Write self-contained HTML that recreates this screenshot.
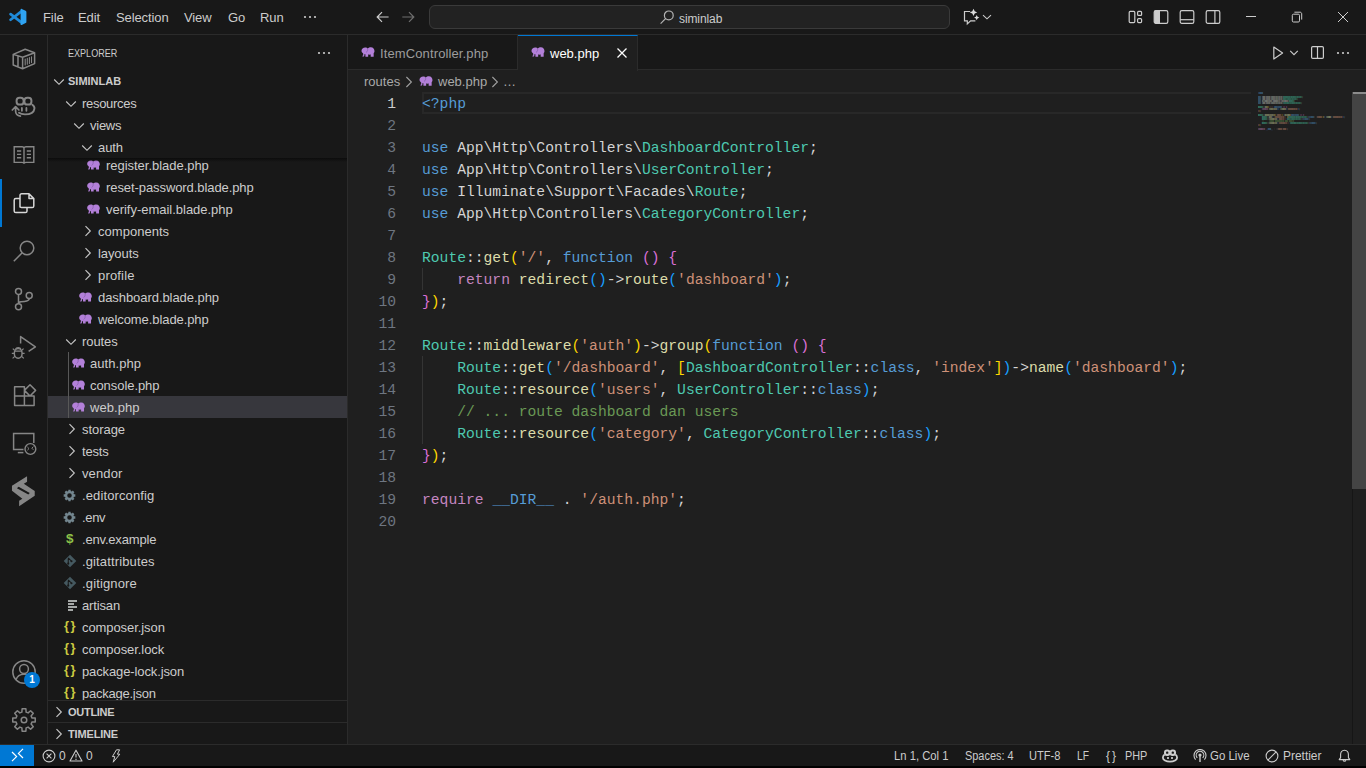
<!DOCTYPE html>
<html>
<head>
<meta charset="utf-8">
<title>web.php - siminlab</title>
<style>
*{box-sizing:border-box;margin:0;padding:0}
html,body{width:1366px;height:768px;overflow:hidden;background:#181818;color:#cccccc;font-family:"Liberation Sans",sans-serif;font-size:13px}
.abs{position:absolute}
#titlebar{position:absolute;left:0;top:0;width:1366px;height:35px;background:#181818;border-bottom:1px solid #2b2b2b}
#activity{position:absolute;left:0;top:35px;width:48px;height:709px;background:#181818;border-right:1px solid #2b2b2b}
#sidebar{position:absolute;left:48px;top:35px;width:300px;height:709px;background:#181818;border-right:1px solid #2b2b2b;overflow:hidden}
#editor{position:absolute;left:348px;top:35px;width:1018px;height:709px;background:#1f1f1f}
#status{position:absolute;left:0;top:744px;width:1366px;height:22px;background:#181818;border-top:1px solid #2b2b2b;font-size:12px;line-height:22px;color:#cccccc;white-space:nowrap}
#strip{position:absolute;left:0;top:766px;width:1366px;height:2px;background:#000}
.st{position:absolute;top:0;height:21px;line-height:22px;transform-origin:left center}
/* title bar */
.menu{letter-spacing:-.1px;position:absolute;top:1px;height:34px;line-height:34px;font-size:13px;color:#cccccc;white-space:nowrap}
#cmd{position:absolute;left:429px;top:5px;width:521px;height:24px;border:1px solid #3a3a3a;border-radius:6px;background:#222222}
/* sidebar */
.row{position:absolute;left:0;width:299px;height:22px;line-height:22px;white-space:nowrap;color:#cccccc;font-size:13px}
.row .lbl{position:absolute;top:1px}
.row svg{position:absolute}
#list{position:absolute;left:0;top:0;width:299px;height:665px;overflow:hidden}
#sticky{position:absolute;left:0;top:57px;width:299px;height:66px;background:#181818}
#sticky:after{content:"";position:absolute;left:0;top:66px;width:299px;height:4px;background:linear-gradient(rgba(0,0,0,.5),rgba(0,0,0,0))}
#sticky .row{margin-top:-57px}
.pane{position:absolute;left:0;width:299px;height:22px;line-height:22px;border-top:1px solid #2b2b2b;background:#181818;font-size:11px;font-weight:bold;color:#cccccc}
/* tabs */
#tabs{position:absolute;left:0;top:0;width:1018px;height:35px;background:#181818;border-bottom:1px solid #2b2b2b}
.tab{position:absolute;top:0;height:35px;line-height:35px;font-size:13px;border-right:1px solid #2b2b2b;white-space:nowrap}
#crumbs{position:absolute;left:0;top:35px;width:1018px;height:22px;line-height:22px;font-size:13px;color:#a9a9a9;white-space:nowrap}
#mm{position:absolute;left:910px;top:57px;width:900px;height:440px;transform:scale(.1136,.1667);transform-origin:0 0;font-family:"Liberation Mono",monospace;font-size:14.67px;line-height:13px;white-space:pre;font-weight:bold;color:#d4d4d4;opacity:.82}
.ml{position:absolute;left:0;height:12px;margin-top:-5px}
.ml,.ml span{text-shadow:0 4px 0 currentColor}
/* code */
#code{position:absolute;left:0;top:57px;width:1018px;height:652px;font-family:"Liberation Mono",monospace;font-size:14.67px;line-height:22px;white-space:pre}
.ln{margin-top:1px;position:absolute;left:0;width:48px;text-align:right;color:#6e7681;height:22px}
.cl{margin-top:1px;position:absolute;left:74px;height:22px;color:#d4d4d4}
.k{color:#569cd6}.t{color:#4ec9b0}.f{color:#dcdcaa}.s{color:#ce9178}.c{color:#6a9955}.p{color:#c586c0}
.hl{position:absolute;left:74px;top:0;width:829px;height:22px;border:2px solid #282828;border-right:0}
.ig{position:absolute;left:74px;width:1px;background:#343434}
.b1{color:#ffd700}.b2{color:#da70d6}.b3{color:#179fff}
</style>
</head>
<body>
<svg width="0" height="0" style="position:absolute"><defs>
<symbol id="el" viewBox="0 0 16 12"><path d="M4.6 0.5 C6.2 0.5 7.1 1.1 7.7 1.8 C8.7 0.8 10 0.4 11.4 0.4 C14.3 0.4 15.8 2.6 15.8 5.2 C15.8 6.2 15.4 6.8 14.8 7.4 V11.6 H11.2 V9.1 C10.2 9.3 9.2 9.3 8.2 9.1 V11.6 H4.9 V8.7 C4.4 8.8 4 8.8 3.6 8.7 V10.3 C3.6 11.4 2.7 11.9 1.5 11.6 V10.3 C2.1 10.3 2.2 10 2.2 9.6 V7.8 C0.9 7 0.2 5.9 0.2 4.6 C0.2 2.2 2.2 0.5 4.6 0.5 Z" fill="#b380d9"/><path d="M7.4 2 C8 3.6 7.4 5.6 5.6 6.6" fill="none" stroke="#6d4a94" stroke-width=".8" opacity=".75"/></symbol>
<symbol id="gear" viewBox="0 0 16 16"><path d="M6.52 2.49 L6.61 0.83 L9.39 0.83 L9.48 2.49 L10.85 3.06 L12.08 1.95 L14.05 3.92 L12.94 5.15 L13.51 6.52 L15.17 6.61 L15.17 9.39 L13.51 9.48 L12.94 10.85 L14.05 12.08 L12.08 14.05 L10.85 12.94 L9.48 13.51 L9.39 15.17 L6.61 15.17 L6.52 13.51 L5.15 12.94 L3.92 14.05 L1.95 12.08 L3.06 10.85 L2.49 9.48 L0.83 9.39 L0.83 6.61 L2.49 6.52 L3.06 5.15 L1.95 3.92 L3.92 1.95 L5.15 3.06 Z M8 5.2 A2.8 2.8 0 1 0 8 10.8 A2.8 2.8 0 1 0 8 5.2 Z" fill="#73868f" fill-rule="evenodd"/></symbol>
<symbol id="git" viewBox="0 0 16 16"><path d="M8 0.8 L15.2 8 L8 15.2 L0.8 8 Z" fill="#455960"/><path d="M6 4.5 L9.5 8 M6 5 V11 M9.5 8 V8.5" stroke="#181818" stroke-width="1.2" fill="none"/><circle cx="6" cy="11" r="1.2" fill="#181818"/><circle cx="9.7" cy="8.3" r="1.2" fill="#181818"/></symbol>
</defs></svg>
<div id="titlebar">
<svg class="abs" style="left:9px;top:8px" width="18" height="18" viewBox="0 0 18 18"><path d="M1.6 6.1 L12.4 14.4 M1.6 11.7 L12.4 3.4" stroke="#1f8ad8" stroke-width="2.7" stroke-linecap="round" fill="none"/><path d="M11.6 1.4 C11.6 0.8 12.2 0.6 12.8 0.9 L16.6 2.7 C17.1 2.9 17.4 3.3 17.4 3.9 V13.9 C17.4 14.5 17.1 14.9 16.6 15.1 L12.8 16.9 C12.2 17.2 11.6 17 11.6 16.4 Z" fill="#2fa3f2"/></svg>
<div class="menu" style="left:43px">File</div>
<div class="menu" style="left:78px">Edit</div>
<div class="menu" style="left:116px">Selection</div>
<div class="menu" style="left:184px">View</div>
<div class="menu" style="left:228px">Go</div>
<div class="menu" style="left:260px">Run</div>
<svg class="abs" style="left:303px;top:15px" width="14" height="4" viewBox="0 0 14 4"><circle cx="2" cy="2" r="1.1" fill="#cccccc"/><circle cx="7" cy="2" r="1.1" fill="#cccccc"/><circle cx="12" cy="2" r="1.1" fill="#cccccc"/></svg>
<svg class="abs" style="left:374.5px;top:9.4px" width="16" height="16" viewBox="0 0 16 16"><path d="M13.6 8 H2.5 M7 3.2 L2.2 8 L7 12.8" fill="none" stroke="#cccccc" stroke-width="1.2"/></svg>
<svg class="abs" style="left:400px;top:9.4px" width="16" height="16" viewBox="0 0 16 16"><path d="M2.3 8 H13.5 M9 3.2 L13.8 8 L9 12.8" fill="none" stroke="#6f6f6f" stroke-width="1.2"/></svg>
<div id="cmd"></div>
<svg class="abs" style="left:659px;top:9px" width="16" height="16" viewBox="0 0 16 16"><circle cx="9.8" cy="6.4" r="4.4" fill="none" stroke="#b4b4b4" stroke-width="1.2"/><path d="M6.8 9.4 L1.6 14.6" stroke="#b4b4b4" stroke-width="1.2"/></svg>
<div class="menu" style="left:679px;top:2px;font-size:12px;letter-spacing:-0.1px">siminlab</div>
<!-- title right -->
<svg class="abs" style="left:960px;top:6px" width="24" height="22" viewBox="0 0 24 22"><path d="M10.2 5.5 H4.5 V14.8 H7.3 V17.9 L10.6 14.8 H15.4" fill="none" stroke="#cccccc" stroke-width="1.2" stroke-linejoin="miter"/><path d="M13.5 2.7 L14.7 5.2 L17.2 6.4 L14.7 7.6 L13.5 10.1 L12.3 7.6 L9.8 6.4 L12.3 5.2 Z M16.7 9 L17.55 10.75 L19.3 11.6 L17.55 12.45 L16.7 14.2 L15.85 12.45 L14.1 11.6 L15.85 10.75 Z" fill="#dcdcdc"/></svg>
<svg class="abs" style="left:982px;top:13px" width="10" height="8" viewBox="0 0 10 8"><path d="M1 2.2 L5 5.8 L9 2.2" fill="none" stroke="#cccccc" stroke-width="1.1"/></svg>
<svg class="abs" style="left:1128px;top:10px" width="15" height="14" viewBox="0 0 15 14" fill="none" stroke="#cccccc" stroke-width="1.2"><rect x="1.2" y="1.4" width="5.6" height="11.2" rx="1"/><rect x="9.6" y="1.4" width="4" height="4" rx="1"/><rect x="9.6" y="8.6" width="4" height="4" rx="1"/></svg>
<svg class="abs" style="left:1153px;top:9px" width="16" height="16" viewBox="0 0 16 16"><rect x="1.2" y="1.6" width="13.6" height="12.8" rx="1.6" fill="none" stroke="#cccccc" stroke-width="1.2"/><path d="M1.2 3 C1.2 2.2 1.8 1.6 2.8 1.6 H7 V14.4 H2.8 C1.8 14.4 1.2 13.8 1.2 13 Z" fill="#cccccc"/></svg>
<svg class="abs" style="left:1179px;top:9px" width="16" height="16" viewBox="0 0 16 16" fill="none" stroke="#cccccc" stroke-width="1.2"><rect x="1.2" y="1.6" width="13.6" height="12.8" rx="1.6"/><path d="M1.2 10.7 H14.8"/></svg>
<svg class="abs" style="left:1205px;top:9px" width="16" height="16" viewBox="0 0 16 16" fill="none" stroke="#cccccc" stroke-width="1.2"><rect x="1.2" y="1.6" width="13.6" height="12.8" rx="1.6"/><path d="M9.9 1.6 V14.4"/></svg>
<div class="abs" style="left:1246px;top:16px;width:10px;height:1px;background:#cccccc"></div>
<svg class="abs" style="left:1291px;top:11px" width="13" height="13" viewBox="0 0 13 13" fill="none" stroke="#cccccc" stroke-width="1"><rect x="1.3" y="3.2" width="7.2" height="7.8" rx="1.2"/><path d="M3.4 1.2 H9 C10 1.2 10.7 1.9 10.7 2.9 V8.6"/></svg>
<svg class="abs" style="left:1337px;top:11px" width="12" height="12" viewBox="0 0 12 12"><path d="M1 1 L11 11 M11 1 L1 11" stroke="#cccccc" stroke-width="1" fill="none"/></svg>
</div>
<div id="activity">
<!-- containers -->
<svg class="abs" style="left:12px;top:13px" width="24" height="24" viewBox="0 0 24 24" fill="none" stroke="#868686" stroke-width="1.5" stroke-linejoin="round" stroke-linecap="round"><path d="M1.2 6.4 L13.2 1.2 L22.6 4.8 V15.6 L10.6 20.8 L1.2 17 Z M1.2 6.4 L10.6 9.2 L22.6 4.8 M10.6 9.2 V20.8 M6 8 V18.8"/><path d="M13.2 11 V17 M15.3 10.2 V16.2 M17.4 9.5 V15.4 M19.5 8.7 V14.6" stroke-width="1.1"/></svg>
<!-- copilot edits -->
<svg class="abs" style="left:6px;top:53px" width="36" height="36" viewBox="0 0 36 36" fill="none" stroke="#868686" stroke-width="2" stroke-linecap="round"><rect x="10.6" y="9.7" width="7" height="6.9" rx="2.9"/><rect x="18.4" y="9.7" width="7" height="6.9" rx="2.9"/><path d="M26.3 16.8 C28.2 18 28.6 19.6 28.4 20.8 C28 23.8 25 26.2 19 26.4 C16.4 26.4 14.4 25.8 13 24.8" stroke-width="1.9"/><path d="M15.9 19.9 V22.8 M20.4 19.9 V22.8" stroke-width="1.8"/><path d="M6.3 22 L9.6 18.7 L12.9 22 M9.6 19 V23 C9.6 26 11.4 27.7 14.4 28.1" stroke-width="1.7" stroke-linejoin="round"/></svg>
<!-- book -->
<svg class="abs" style="left:12px;top:108px" width="24" height="24" viewBox="0 0 24 24" fill="none" stroke="#868686" stroke-width="1.4"><path d="M2.2 3.8 H10 C11.2 3.8 12 4.6 12 5.6 C12 4.6 12.8 3.8 14 3.8 H21.8 V19.4 H14 C12.8 19.4 12 20 12 20.8 C12 20 11.2 19.4 10 19.4 H2.2 Z M12 5.6 V20.6 M5 8 H9.2 M5 11.4 H9.2 M5 14.8 H9.2 M14.8 8 H19 M14.8 11.4 H19 M14.8 14.8 H19"/></svg>
<!-- explorer (active) -->
<div class="abs" style="left:0;top:144px;width:2px;height:48px;background:#0078d4"></div>
<svg class="abs" style="left:12px;top:156px" width="24" height="24" viewBox="0 0 24 24" fill="none" stroke="#d7d7d7" stroke-width="1.5" stroke-linejoin="round"><path d="M8 16.5 V4.5 C8 3.4 8.6 2.8 9.6 2.8 H17 L21.8 7.6 V15 C21.8 16 21.2 16.6 20.2 16.6 H9.6 C8.6 16.6 8 16 8 15 M17 2.8 V7.6 H21.8 M7.6 7.6 H3.8 C2.8 7.6 2.2 8.2 2.2 9.2 V20 C2.2 21 2.8 21.6 3.8 21.6 H13.4 C14.4 21.6 15 21 15 20 V16.8"/></svg>
<!-- search -->
<svg class="abs" style="left:12px;top:204px" width="24" height="24" viewBox="0 0 24 24" fill="none" stroke="#868686" stroke-width="1.5"><circle cx="15" cy="9" r="6.8"/><path d="M10.2 13.8 L1.8 22.2"/></svg>
<!-- git -->
<svg class="abs" style="left:12px;top:252px" width="24" height="24" viewBox="0 0 24 24" fill="none" stroke="#868686" stroke-width="1.5"><circle cx="6.5" cy="4.4" r="3"/><circle cx="6.5" cy="19.8" r="3"/><circle cx="17.2" cy="8.4" r="3"/><path d="M6.5 7.4 V16.8 M17.2 11.4 C17.6 14 13 14.6 9 14.8 C7.4 15 6.5 15.8 6.5 17"/></svg>
<!-- debug -->
<svg class="abs" style="left:11px;top:299px" width="26" height="26" viewBox="0 0 26 26" fill="none" stroke="#868686" stroke-width="1.5" stroke-linejoin="round"><path d="M9.6 9.5 V2.6 L24.4 12.8 L17.6 17.4"/><g transform="translate(0,1.6)"><ellipse cx="7.2" cy="17.8" rx="3.9" ry="4.8"/><path d="M3.6 15.6 H10.8 M4.6 13.4 C5.2 11.6 9.2 11.6 9.8 13.4 M3.3 17.8 H0.8 M13.6 17.8 H11.1 M3.8 20.8 L1.6 22.8 M10.6 20.8 L12.8 22.8 M3.6 14.6 L1.8 13 M10.8 14.6 L12.6 13" stroke-width="1.2"/></g></svg>
<!-- extensions -->
<svg class="abs" style="left:12px;top:348px" width="26" height="26" viewBox="0 0 26 26" fill="none" stroke="#868686" stroke-width="1.5" stroke-linejoin="round"><path d="M2.6 3.8 H12.4 V22.4 H2.6 Z M2.6 13 H22.1 V22.4 H12.4 M18 1.8 L23.6 7.4 L18 13 L12.4 7.4 Z"/></svg>
<!-- remote explorer -->
<svg class="abs" style="left:11px;top:395px" width="27" height="26" viewBox="0 0 27 26" fill="none" stroke="#868686" stroke-width="1.5"><path d="M12.5 19.4 H2.6 V3.4 H22.8 V13"/><path d="M6.8 22.6 H12.4"/><circle cx="19.4" cy="19" r="5.4" stroke-width="1.4"/><path d="M16.4 17 L18 18.6 L16.4 20.2 M22.4 16.6 L20.8 18.2 L22.4 19.8" stroke-width="1"/></svg>
<!-- S logo -->
<svg class="abs" style="left:11px;top:441px" width="26" height="32" viewBox="0 0 26 32"><path d="M16.06 0.2 V5.65 L12.84 7.63 L23.73 15.06 V19.76 L8.14 30.16 V24.7 L11.36 22.73 L0.96 14.8 V9.86 Z M7.64 10.85 L18.78 17.04 L17.3 18.5 L5.9 12.3 Z" fill="#868686" fill-rule="evenodd"/></svg>
<!-- account -->
<svg class="abs" style="left:11px;top:624px" width="26" height="26" viewBox="0 0 26 26" fill="none" stroke="#868686" stroke-width="1.5"><circle cx="13" cy="13" r="11.2"/><circle cx="13" cy="10" r="4.4"/><path d="M5 20.8 C6.4 16.4 9.6 15.2 13 15.2 C16.4 15.2 19.6 16.4 21 20.8"/></svg>
<div class="abs" style="left:24px;top:637px;width:16px;height:16px;border-radius:8px;background:#0078d4;color:#fff;font-size:10px;font-weight:bold;line-height:16px;text-align:center">1</div>
<!-- gear -->
<svg class="abs" style="left:11px;top:672px" width="26" height="26" viewBox="0 0 26 26" fill="none" stroke="#868686" stroke-width="1.5" stroke-linejoin="round"><path d="M10.88 5.08 L11.12 1.76 L14.88 1.76 L15.12 5.08 L17.10 5.90 L19.62 3.72 L22.28 6.38 L20.10 8.90 L20.92 10.88 L24.24 11.12 L24.24 14.88 L20.92 15.12 L20.10 17.10 L22.28 19.62 L19.62 22.28 L17.10 20.10 L15.12 20.92 L14.88 24.24 L11.12 24.24 L10.88 20.92 L8.90 20.10 L6.38 22.28 L3.72 19.62 L5.90 17.10 L5.08 15.12 L1.76 14.88 L1.76 11.12 L5.08 10.88 L5.90 8.90 L3.72 6.38 L6.38 3.72 L8.90 5.90 Z"/><circle cx="13" cy="13" r="2.8"/></svg>
</div>
<div id="sidebar">
<div class="abs" style="left:20px;top:0;height:35px;line-height:36px;font-size:11px;color:#cccccc;transform:scaleX(.823);transform-origin:left">EXPLORER</div>
<svg class="abs" style="left:269px;top:16px" width="14" height="4" viewBox="0 0 14 4"><circle cx="2" cy="2" r="1.1" fill="#cccccc"/><circle cx="7" cy="2" r="1.1" fill="#cccccc"/><circle cx="12" cy="2" r="1.1" fill="#cccccc"/></svg>
<div class="row" style="top:35px;font-weight:bold;font-size:11px"><svg class="abs" style="left:5px;top:8px" width="12" height="8" viewBox="0 0 12 8"><path d="M1.2 1.5 L6 6.3 L10.8 1.5" fill="none" stroke="#c5c5c5" stroke-width="1.15"/></svg><span class="lbl" style="left:20px;top:0">SIMINLAB</span></div>
<div id="list">
<div class="row" style="top:119px"><svg class="abs" style="left:39px;top:6px" width="13" height="10"><use href="#el"/></svg><span class="lbl" style="left:58px;letter-spacing:-0.03px">register.blade.php</span></div>
<div class="row" style="top:141px"><svg class="abs" style="left:39px;top:6px" width="13" height="10"><use href="#el"/></svg><span class="lbl" style="left:58px;letter-spacing:-0.08px">reset-password.blade.php</span></div>
<div class="row" style="top:163px"><svg class="abs" style="left:39px;top:6px" width="13" height="10"><use href="#el"/></svg><span class="lbl" style="left:58px;letter-spacing:-0.02px">verify-email.blade.php</span></div>
<div class="row" style="top:185px"><svg class="abs" style="left:36px;top:5px" width="8" height="12" viewBox="0 0 8 12"><path d="M1.5 1.2 L6.3 6 L1.5 10.8" fill="none" stroke="#c5c5c5" stroke-width="1.15"/></svg><span class="lbl" style="left:50px;letter-spacing:0.03px">components</span></div>
<div class="row" style="top:207px"><svg class="abs" style="left:36px;top:5px" width="8" height="12" viewBox="0 0 8 12"><path d="M1.5 1.2 L6.3 6 L1.5 10.8" fill="none" stroke="#c5c5c5" stroke-width="1.15"/></svg><span class="lbl" style="left:50px;letter-spacing:-0.09px">layouts</span></div>
<div class="row" style="top:229px"><svg class="abs" style="left:36px;top:5px" width="8" height="12" viewBox="0 0 8 12"><path d="M1.5 1.2 L6.3 6 L1.5 10.8" fill="none" stroke="#c5c5c5" stroke-width="1.15"/></svg><span class="lbl" style="left:50px;letter-spacing:0.18px">profile</span></div>
<div class="row" style="top:251px"><svg class="abs" style="left:31px;top:6px" width="13" height="10"><use href="#el"/></svg><span class="lbl" style="left:50px;letter-spacing:-0.06px">dashboard.blade.php</span></div>
<div class="row" style="top:273px"><svg class="abs" style="left:31px;top:6px" width="13" height="10"><use href="#el"/></svg><span class="lbl" style="left:50px;letter-spacing:-0.08px">welcome.blade.php</span></div>
<div class="row" style="top:295px"><svg class="abs" style="left:17px;top:8px" width="12" height="8" viewBox="0 0 12 8"><path d="M1.2 1.5 L6 6.3 L10.8 1.5" fill="none" stroke="#c5c5c5" stroke-width="1.15"/></svg><span class="lbl" style="left:34px;letter-spacing:-0.07px">routes</span></div>
<div class="row" style="top:317px"><svg class="abs" style="left:24px;top:6px" width="13" height="10"><use href="#el"/></svg><span class="lbl" style="left:42px;letter-spacing:0.05px">auth.php</span></div>
<div class="row" style="top:339px"><svg class="abs" style="left:24px;top:6px" width="13" height="10"><use href="#el"/></svg><span class="lbl" style="left:42px;letter-spacing:-0.06px">console.php</span></div>
<div class="row" style="top:361px;background:#37373d"><svg class="abs" style="left:24px;top:6px" width="13" height="10"><use href="#el"/></svg><span class="lbl" style="left:42px;letter-spacing:0.05px">web.php</span></div>
<div class="row" style="top:383px"><svg class="abs" style="left:20px;top:5px" width="8" height="12" viewBox="0 0 8 12"><path d="M1.5 1.2 L6.3 6 L1.5 10.8" fill="none" stroke="#c5c5c5" stroke-width="1.15"/></svg><span class="lbl" style="left:34px;letter-spacing:-0.05px">storage</span></div>
<div class="row" style="top:405px"><svg class="abs" style="left:20px;top:5px" width="8" height="12" viewBox="0 0 8 12"><path d="M1.5 1.2 L6.3 6 L1.5 10.8" fill="none" stroke="#c5c5c5" stroke-width="1.15"/></svg><span class="lbl" style="left:34px;letter-spacing:-0.17px">tests</span></div>
<div class="row" style="top:427px"><svg class="abs" style="left:20px;top:5px" width="8" height="12" viewBox="0 0 8 12"><path d="M1.5 1.2 L6.3 6 L1.5 10.8" fill="none" stroke="#c5c5c5" stroke-width="1.15"/></svg><span class="lbl" style="left:34px;letter-spacing:0.11px">vendor</span></div>
<div class="row" style="top:449px"><svg class="abs" style="left:15px;top:5px" width="13" height="13"><use href="#gear"/></svg><span class="lbl" style="left:34px;letter-spacing:0.12px">.editorconfig</span></div>
<div class="row" style="top:471px"><svg class="abs" style="left:15px;top:5px" width="13" height="13"><use href="#gear"/></svg><span class="lbl" style="left:34px;letter-spacing:-0.34px">.env</span></div>
<div class="row" style="top:493px"><span class="abs" style="left:18px;top:0;color:#8dc149;font-size:13.5px;font-weight:bold">$</span><span class="lbl" style="left:34px;letter-spacing:-0.18px">.env.example</span></div>
<div class="row" style="top:515px"><svg class="abs" style="left:15px;top:4px" width="14" height="14"><use href="#git"/></svg><span class="lbl" style="left:34px;letter-spacing:0.13px">.gitattributes</span></div>
<div class="row" style="top:537px"><svg class="abs" style="left:15px;top:4px" width="14" height="14"><use href="#git"/></svg><span class="lbl" style="left:34px;letter-spacing:0.15px">.gitignore</span></div>
<div class="row" style="top:559px"><svg class="abs" style="left:20px;top:6px" width="10" height="11" viewBox="0 0 10 11"><path d="M0 1 H9 M0 4 H6 M0 7 H9 M0 10 H5" stroke="#d4d7d6" stroke-width="1.4"/></svg><span class="lbl" style="left:34px;letter-spacing:-0.15px">artisan</span></div>
<div class="row" style="top:581px"><span class="abs" style="left:16px;top:-1px;color:#cbcb41;font-size:13px;font-weight:bold;letter-spacing:1.5px;line-height:22px">{}</span><span class="lbl" style="left:34px;letter-spacing:-0.08px">composer.json</span></div>
<div class="row" style="top:603px"><span class="abs" style="left:16px;top:-1px;color:#cbcb41;font-size:13px;font-weight:bold;letter-spacing:1.5px;line-height:22px">{}</span><span class="lbl" style="left:34px;letter-spacing:-0.07px">composer.lock</span></div>
<div class="row" style="top:625px"><span class="abs" style="left:16px;top:-1px;color:#cbcb41;font-size:13px;font-weight:bold;letter-spacing:1.5px;line-height:22px">{}</span><span class="lbl" style="left:34px;letter-spacing:-0.12px">package-lock.json</span></div>
<div class="row" style="top:647px"><span class="abs" style="left:16px;top:-1px;color:#cbcb41;font-size:13px;font-weight:bold;letter-spacing:1.5px;line-height:22px">{}</span><span class="lbl" style="left:34px;letter-spacing:-0.24px">package.json</span></div>
<div class="abs" style="left:20px;top:317px;width:1px;height:66px;background:#585858"></div>
</div>
<div id="sticky">
<div class="row" style="top:57px"><svg class="abs" style="left:17px;top:8px" width="12" height="8" viewBox="0 0 12 8"><path d="M1.2 1.5 L6 6.3 L10.8 1.5" fill="none" stroke="#c5c5c5" stroke-width="1.15"/></svg><span class="lbl" style="left:34px;letter-spacing:-0.3px">resources</span></div>
<div class="row" style="top:79px"><svg class="abs" style="left:25px;top:8px" width="12" height="8" viewBox="0 0 12 8"><path d="M1.2 1.5 L6 6.3 L10.8 1.5" fill="none" stroke="#c5c5c5" stroke-width="1.15"/></svg><span class="lbl" style="left:42px;letter-spacing:-0.25px">views</span></div>
<div class="row" style="top:101px"><svg class="abs" style="left:33px;top:8px" width="12" height="8" viewBox="0 0 12 8"><path d="M1.2 1.5 L6 6.3 L10.8 1.5" fill="none" stroke="#c5c5c5" stroke-width="1.15"/></svg><span class="lbl" style="left:50px;letter-spacing:-0.08px">auth</span></div>
</div>
<div class="pane" style="top:665px"><svg class="abs" style="left:6.7px;top:5px" width="8" height="12" viewBox="0 0 8 12"><path d="M1.5 1.2 L6.3 6 L1.5 10.8" fill="none" stroke="#c5c5c5" stroke-width="1.15"/></svg><span class="abs" style="left:20px;top:0;letter-spacing:-0.28px">OUTLINE</span></div>
<div class="pane" style="top:687px"><svg class="abs" style="left:6.7px;top:5px" width="8" height="12" viewBox="0 0 8 12"><path d="M1.5 1.2 L6.3 6 L1.5 10.8" fill="none" stroke="#c5c5c5" stroke-width="1.15"/></svg><span class="abs" style="left:20px;top:0;letter-spacing:-0.16px">TIMELINE</span></div>
</div>
<div id="editor">
<div id="tabs">
<div class="tab" style="left:0;width:170px;color:#9d9d9d"><svg class="abs" style="left:13px;top:12px" width="14" height="10"><use href="#el"/></svg><span class="abs" style="left:32px;top:1px;letter-spacing:.12px">ItemController.php</span></div>
<div class="tab" style="left:170px;width:120px;color:#ffffff;background:#1f1f1f;border-top:1px solid #0078d4;height:36px;line-height:33px"><svg class="abs" style="left:13px;top:11px" width="14" height="10"><use href="#el"/></svg><span class="abs" style="left:32px;top:1px">web.php</span>
<svg class="abs" style="left:98px;top:11px" width="12" height="12" viewBox="0 0 12 12"><path d="M1.5 1.5 L10.5 10.5 M10.5 1.5 L1.5 10.5" stroke="#ffffff" stroke-width="1.3" fill="none"/></svg></div>
<svg class="abs" style="left:924px;top:10px" width="14" height="16" viewBox="0 0 14 16"><path d="M1.8 2 L10.6 8 L1.8 14 Z" fill="none" stroke="#cccccc" stroke-width="1.2" stroke-linejoin="round"/></svg>
<svg class="abs" style="left:941px;top:14px" width="10" height="8" viewBox="0 0 10 8"><path d="M1.2 1.8 L5 5.6 L8.8 1.8" fill="none" stroke="#cccccc" stroke-width="1.1"/></svg>
<svg class="abs" style="left:962px;top:10px" width="15" height="15" viewBox="0 0 15 15"><rect x="1.6" y="1.6" width="11.8" height="11.8" rx="1.2" fill="none" stroke="#cccccc" stroke-width="1.2"/><path d="M7.5 1.6 V13.4" stroke="#cccccc" stroke-width="1.2"/></svg>
<svg class="abs" style="left:988px;top:16px" width="14" height="4" viewBox="0 0 14 4"><circle cx="2" cy="2" r="1.1" fill="#cccccc"/><circle cx="7" cy="2" r="1.1" fill="#cccccc"/><circle cx="12" cy="2" r="1.1" fill="#cccccc"/></svg>
</div>
<div id="crumbs">
<span class="abs" style="left:16px;top:1px">routes</span>
<svg class="abs" style="left:57px;top:6px" width="8" height="12" viewBox="0 0 8 12"><path d="M1.4 1 L6.4 6 L1.4 11" fill="none" stroke="#a0a0a0" stroke-width="1.1"/></svg>
<svg class="abs" style="left:71px;top:6px" width="14" height="10"><use href="#el"/></svg>
<span class="abs" style="left:90px;top:1px">web.php</span>
<svg class="abs" style="left:143px;top:6px" width="8" height="12" viewBox="0 0 8 12"><path d="M1.4 1 L6.4 6 L1.4 11" fill="none" stroke="#a0a0a0" stroke-width="1.1"/></svg>
<span class="abs" style="left:155px;top:1px">&#8230;</span>
</div>
<div id="mm"><div class="ml" style="top:0px"><span class="k">&lt;?php</span></div><div class="ml" style="top:24px"><span class="k">use</span> App\Http\Controllers\<span class="t">DashboardController</span>;</div><div class="ml" style="top:36px"><span class="k">use</span> App\Http\Controllers\<span class="t">UserController</span>;</div><div class="ml" style="top:48px"><span class="k">use</span> Illuminate\Support\Facades\<span class="t">Route</span>;</div><div class="ml" style="top:60px"><span class="k">use</span> App\Http\Controllers\<span class="t">CategoryController</span>;</div><div class="ml" style="top:84px"><span class="t">Route</span>::<span class="f">get</span><span class="b1">(</span><span class="s">'/'</span>, <span class="k">function</span> <span class="b2">()</span> <span class="b2">{</span></div><div class="ml" style="top:96px">    <span class="p">return</span> <span class="f">redirect</span><span class="b3">()</span>-&gt;<span class="f">route</span><span class="b3">(</span><span class="s">'dashboard'</span><span class="b3">)</span>;</div><div class="ml" style="top:108px"><span class="b2">}</span><span class="b1">)</span>;</div><div class="ml" style="top:132px"><span class="t">Route</span>::<span class="f">middleware</span><span class="b1">(</span><span class="s">'auth'</span><span class="b1">)</span>-&gt;<span class="f">group</span><span class="b1">(</span><span class="k">function</span> <span class="b2">()</span> <span class="b2">{</span></div><div class="ml" style="top:144px">    <span class="t">Route</span>::<span class="f">get</span><span class="b3">(</span><span class="s">'/dashboard'</span>, <span class="b1">[</span><span class="t">DashboardController</span>::<span class="k">class</span>, <span class="s">'index'</span><span class="b1">]</span><span class="b3">)</span>-&gt;<span class="f">name</span><span class="b3">(</span><span class="s">'dashboard'</span><span class="b3">)</span>;</div><div class="ml" style="top:156px">    <span class="t">Route</span>::<span class="f">resource</span><span class="b3">(</span><span class="s">'users'</span>, <span class="t">UserController</span>::<span class="k">class</span><span class="b3">)</span>;</div><div class="ml" style="top:168px">    <span class="c">// ... route dashboard dan users</span></div><div class="ml" style="top:180px">    <span class="t">Route</span>::<span class="f">resource</span><span class="b3">(</span><span class="s">'category'</span>, <span class="t">CategoryController</span>::<span class="k">class</span><span class="b3">)</span>;</div><div class="ml" style="top:192px"><span class="b2">}</span><span class="b1">)</span>;</div><div class="ml" style="top:216px"><span class="p">require</span> <span class="k">__DIR__</span> . <span class="s">'/auth.php'</span>;</div></div>
<div class="abs" style="left:1004px;top:57px;width:1px;height:652px;background:#161616"></div><div class="abs" style="left:1004px;top:57px;width:14px;height:397px;background:#444444"></div><div class="abs" style="left:1005px;top:57px;width:13px;height:2px;background:#8c8c8c"></div>
<div id="code">
<div class="hl"></div>
<div class="ig" style="top:176px;height:22px"></div>
<div class="ig" style="top:264px;height:88px"></div>
<div class="ln" style="top:0;color:#cccccc">1</div><div class="cl" style="top:0"><span class="k">&lt;?php</span></div>
<div class="ln" style="top:22px">2</div>
<div class="ln" style="top:44px">3</div><div class="cl" style="top:44px"><span class="k">use</span> App\Http\Controllers\<span class="t">DashboardController</span>;</div>
<div class="ln" style="top:66px">4</div><div class="cl" style="top:66px"><span class="k">use</span> App\Http\Controllers\<span class="t">UserController</span>;</div>
<div class="ln" style="top:88px">5</div><div class="cl" style="top:88px"><span class="k">use</span> Illuminate\Support\Facades\<span class="t">Route</span>;</div>
<div class="ln" style="top:110px">6</div><div class="cl" style="top:110px"><span class="k">use</span> App\Http\Controllers\<span class="t">CategoryController</span>;</div>
<div class="ln" style="top:132px">7</div>
<div class="ln" style="top:154px">8</div><div class="cl" style="top:154px"><span class="t">Route</span>::<span class="f">get</span><span class="b1">(</span><span class="s">'/'</span>, <span class="k">function</span> <span class="b2">()</span> <span class="b2">{</span></div>
<div class="ln" style="top:176px">9</div><div class="cl" style="top:176px">    <span class="p">return</span> <span class="f">redirect</span><span class="b3">()</span>-&gt;<span class="f">route</span><span class="b3">(</span><span class="s">'dashboard'</span><span class="b3">)</span>;</div>
<div class="ln" style="top:198px">10</div><div class="cl" style="top:198px"><span class="b2">}</span><span class="b1">)</span>;</div>
<div class="ln" style="top:220px">11</div>
<div class="ln" style="top:242px">12</div><div class="cl" style="top:242px"><span class="t">Route</span>::<span class="f">middleware</span><span class="b1">(</span><span class="s">'auth'</span><span class="b1">)</span>-&gt;<span class="f">group</span><span class="b1">(</span><span class="k">function</span> <span class="b2">()</span> <span class="b2">{</span></div>
<div class="ln" style="top:264px">13</div><div class="cl" style="top:264px">    <span class="t">Route</span>::<span class="f">get</span><span class="b3">(</span><span class="s">'/dashboard'</span>, <span class="b1">[</span><span class="t">DashboardController</span>::<span class="k">class</span>, <span class="s">'index'</span><span class="b1">]</span><span class="b3">)</span>-&gt;<span class="f">name</span><span class="b3">(</span><span class="s">'dashboard'</span><span class="b3">)</span>;</div>
<div class="ln" style="top:286px">14</div><div class="cl" style="top:286px">    <span class="t">Route</span>::<span class="f">resource</span><span class="b3">(</span><span class="s">'users'</span>, <span class="t">UserController</span>::<span class="k">class</span><span class="b3">)</span>;</div>
<div class="ln" style="top:308px">15</div><div class="cl" style="top:308px">    <span class="c">// ... route dashboard dan users</span></div>
<div class="ln" style="top:330px">16</div><div class="cl" style="top:330px">    <span class="t">Route</span>::<span class="f">resource</span><span class="b3">(</span><span class="s">'category'</span>, <span class="t">CategoryController</span>::<span class="k">class</span><span class="b3">)</span>;</div>
<div class="ln" style="top:352px">17</div><div class="cl" style="top:352px"><span class="b2">}</span><span class="b1">)</span>;</div>
<div class="ln" style="top:374px">18</div>
<div class="ln" style="top:396px">19</div><div class="cl" style="top:396px"><span class="p">require</span> <span class="k">__DIR__</span> . <span class="s">'/auth.php'</span>;</div>
<div class="ln" style="top:418px">20</div>
</div>
</div>
<div id="status">
<div class="abs" style="left:0;top:0;width:34px;height:21px;background:#0078d4"></div>
<svg class="abs" style="left:11px;top:3px" width="13" height="14" viewBox="0 0 13 14"><path d="M1 4 L5.6 8.6 L1 13.2 M12 0.8 L7.4 5.4 L12 10" fill="none" stroke="#ffffff" stroke-width="1.2"/></svg>
<svg class="abs" style="left:42px;top:4px" width="14" height="14" viewBox="0 0 14 14"><circle cx="7" cy="7" r="5.9" fill="none" stroke="#cccccc" stroke-width="1.1"/><path d="M4.6 4.6 L9.4 9.4 M9.4 4.6 L4.6 9.4" stroke="#cccccc" stroke-width="1.1"/></svg>
<span class="st" style="left:59px">0</span>
<svg class="abs" style="left:69px;top:4px" width="14" height="13" viewBox="0 0 14 13"><path d="M7 1.2 L13 12 H1 Z" fill="none" stroke="#cccccc" stroke-width="1.1" stroke-linejoin="round"/><path d="M7 5 V8.6 M7 9.8 V11" stroke="#cccccc" stroke-width="1.1"/></svg>
<span class="st" style="left:86px">0</span>
<svg class="abs" style="left:111px;top:4px" width="10" height="14" viewBox="0 0 10 14"><path d="M5.5 0.8 L8.6 0.8 L6.4 5.2 H8.8 L2.2 13.2 L3.8 7.6 H1.4 Z" fill="none" stroke="#cccccc" stroke-width="1" stroke-linejoin="round"/></svg>
<span class="st" style="left:894px;transform:scaleX(0.937)">Ln 1, Col 1</span>
<span class="st" style="left:965px;transform:scaleX(0.91)">Spaces: 4</span>
<span class="st" style="left:1029px;transform:scaleX(0.926)">UTF-8</span>
<span class="st" style="left:1077px;transform:scaleX(0.855)">LF</span>
<span class="st" style="left:1106px;letter-spacing:2px">{}</span>
<span class="st" style="left:1125px;transform:scaleX(0.907)">PHP</span>
<svg class="abs" style="left:1162px;top:4px" width="16" height="14" viewBox="0 0 16 14" fill="none" stroke="#cccccc"><rect x="3" y="1.5" width="4.4" height="4.4" rx="1.9" stroke-width="2.1"/><rect x="8.6" y="1.5" width="4.4" height="4.4" rx="1.9" stroke-width="2.1"/><path d="M2.6 5.6 C1 6.6 0.9 7.8 0.9 8.8 C0.9 10.8 4 12.6 8 12.6 C12 12.6 15.1 10.8 15.1 8.8 C15.1 7.8 15 6.6 13.4 5.6" stroke-width="1.8"/><path d="M6 8 V10 M10 8 V10" stroke-width="1.7"/></svg>
<svg class="abs" style="left:1193px;top:4px" width="14" height="14" viewBox="0 0 14 14"><circle cx="7" cy="6" r="1.6" fill="#cccccc"/><path d="M7 7 V13" stroke="#cccccc" stroke-width="1.4"/><path d="M4.3 8.8 A3.8 3.8 0 1 1 9.7 8.8 M2.6 10.6 A6 6 0 1 1 11.4 10.6" fill="none" stroke="#cccccc" stroke-width="1.1"/></svg>
<span class="st" style="left:1210px;transform:scaleX(0.956)">Go Live</span>
<svg class="abs" style="left:1265px;top:4px" width="14" height="14" viewBox="0 0 14 14"><circle cx="7" cy="7" r="5.9" fill="none" stroke="#cccccc" stroke-width="1.1"/><path d="M2.9 11.1 L11.1 2.9" stroke="#cccccc" stroke-width="1.1"/></svg>
<span class="st" style="left:1283px;transform:scaleX(0.995)">Prettier</span>
<svg class="abs" style="left:1338px;top:4px" width="13" height="14" viewBox="0 0 13 14"><path d="M6.5 1.2 C3.8 1.2 2.6 3.2 2.6 5.6 V8.6 L1.2 10.6 H11.8 L10.4 8.6 V5.6 C10.4 3.2 9.2 1.2 6.5 1.2 Z M5.2 11.4 C5.4 12.6 7.6 12.6 7.8 11.4" fill="none" stroke="#cccccc" stroke-width="1.1" stroke-linejoin="round"/></svg>
</div>
<div id="strip"></div>
</body>
</html>
